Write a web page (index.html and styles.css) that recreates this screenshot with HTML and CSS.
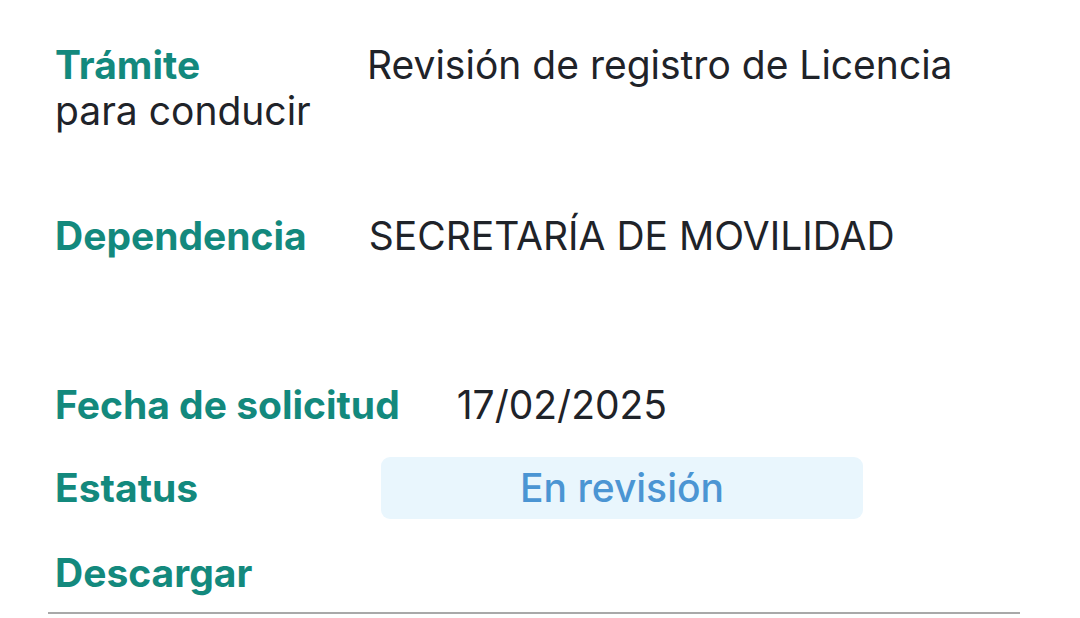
FILE: index.html
```html
<!DOCTYPE html>
<html lang="es">
<head>
<meta charset="utf-8">
<link rel="stylesheet" href="styles.css">
<title>Detalle del trámite</title>
</head>
<body>
  <section class="detail">
    <p class="row row-tramite"><span class="label">Trámite</span><span class="value">Revisión de registro de Licencia para conducir</span></p>
    <p class="row row-dependencia"><span class="label">Dependencia</span><span class="value">SECRETARÍA DE MOVILIDAD</span></p>
    <p class="row row-fecha"><span class="label">Fecha de solicitud</span><span class="value">17/02/2025</span></p>
    <div class="row row-status">
      <span class="label">Estatus</span>
      <span class="badge">En revisión</span>
    </div>
    <p class="row row-descargar"><span class="label">Descargar</span></p>
    <hr class="divider">
  </section>
</body>
</html>
```

FILE: styles.css
```css
html, body {
  margin: 0;
  padding: 0;
  background: #ffffff;
}

body {
  font-family: "Inter", "Noto Sans", sans-serif;
  color: #1f2329;
}

.detail {
  padding: 42px 60px 0 55px;
}

.row {
  margin: 0;
  font-size: 39px;
  line-height: 46px;
}

.label {
  display: inline-block;
  min-width: 250px;
  margin-right: 62px;
  line-height: 42px;
  color: #13897d;
  font-weight: 700;
}

.value {
  font-weight: 400;
}

.row-dependencia {
  margin-top: 79px;
}

.row-fecha {
  margin-top: 123px;
}

.row-fecha .label {
  margin-right: 57px;
}

.row-status {
  display: flex;
  align-items: center;
  margin-top: 29px;
}

.row-status .label {
  min-width: 0;
  margin-right: 0;
  width: 326px;
}

.badge {
  display: flex;
  align-items: center;
  justify-content: center;
  width: 482px;
  height: 62px;
  border-radius: 9px;
  background: #e9f6fd;
  color: #4b95d3;
  font-weight: 500;
}

.row-descargar {
  margin-top: 31px;
}

.divider {
  margin: 16px 0 0 -7px;
  border: none;
  height: 2px;
  background: #a9a9a9;
}
```
